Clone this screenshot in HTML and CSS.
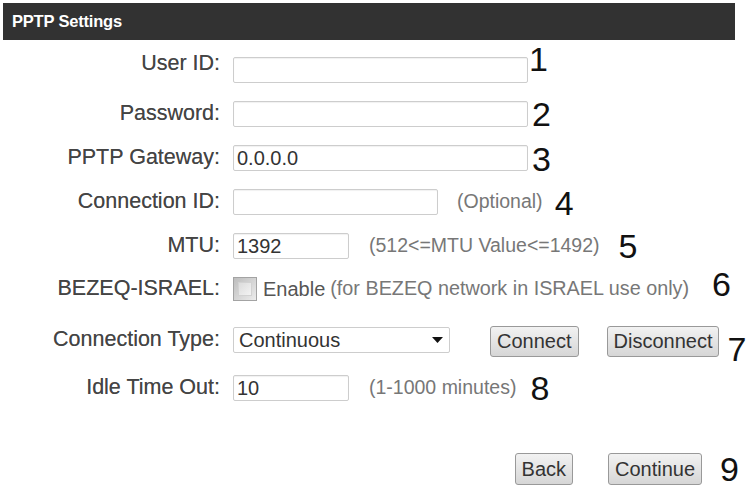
FILE: index.html
```html
<!DOCTYPE html>
<html>
<head>
<meta charset="utf-8">
<link rel="stylesheet" href="styles.css">
</head>
<body>
<div class="header">PPTP Settings</div>
<div class="form">
  <div class="row">
    <label class="lbl lbl-up">User ID:</label>
    <input class="txt w-long" type="text" value="">
    <span class="num n1">1</span>
  </div>
  <div class="row">
    <label class="lbl">Password:</label>
    <input class="txt w-long" type="password" value="">
    <span class="num n2">2</span>
  </div>
  <div class="row">
    <label class="lbl">PPTP Gateway:</label>
    <input class="txt w-long" type="text" value="0.0.0.0">
    <span class="num n3">3</span>
  </div>
  <div class="row">
    <label class="lbl">Connection ID:</label>
    <input class="txt w-mid" type="text" value="">
    <span class="hint h-opt">(Optional)</span>
    <span class="num n4">4</span>
  </div>
  <div class="row">
    <label class="lbl">MTU:</label>
    <input class="txt w-short" type="text" value="1392">
    <span class="hint h-mtu">(512&lt;=MTU Value&lt;=1492)</span>
    <span class="num n5">5</span>
  </div>
  <div class="row row-check">
    <label class="lbl">BEZEQ-ISRAEL:</label>
    <span class="check"><span class="check-in"></span></span>
    <span class="enable">Enable</span>
    <span class="hint h-bez">(for BEZEQ network in ISRAEL use only)</span>
    <span class="num n6">6</span>
  </div>
  <div class="row row-type">
    <label class="lbl">Connection Type:</label>
    <div class="select">
      <span class="sel-text">Continuous</span>
      <svg class="sel-arrow" width="11" height="6" viewBox="0 0 11 6"><path d="M0 0 H11 L5.5 6 Z" fill="#111"/></svg>
    </div>
    <button class="btn btn-connect">Connect</button>
    <button class="btn btn-disc">Disconnect</button>
    <span class="num n7">7</span>
  </div>
  <div class="row row-idle">
    <label class="lbl">Idle Time Out:</label>
    <input class="txt w-short" type="text" value="10">
    <span class="hint h-idle">(1-1000 minutes)</span>
    <span class="num n8">8</span>
  </div>
  <div class="row row-actions">
    <button class="btn">Back</button>
    <button class="btn btn-cont">Continue</button>
    <span class="num n9">9</span>
  </div>
</div>
</body>
</html>
```
FILE: styles.css
```css
* { box-sizing: border-box; }
html, body { margin: 0; padding: 0; background: #fff; }
body {
  width: 751px;
  height: 489px;
  overflow: hidden;
  font-family: "Liberation Sans", Arial, sans-serif;
}
.header {
  margin: 3px 16px 0 3px;
  height: 37px;
  background: #323232;
  color: #fff;
  font-weight: bold;
  font-size: 16.5px;
  line-height: 37px;
  padding-left: 9px;
  letter-spacing: -0.2px;
}
.form {
  display: flex;
  flex-direction: column;
  padding-top: 8px;
}
.row {
  display: flex;
  align-items: center;
  height: 44px;
}
.lbl {
  width: 220px;
  margin-right: 13px;
  text-align: right;
  font-size: 21.5px;
  color: #444;
  line-height: 1;
  flex: none;
  text-shadow: 0 0 0.6px rgba(60,60,60,0.6);
}
.lbl-up { margin-bottom: 12px; }
.txt {
  height: 26px;
  border: 1px solid #cdcdcd;
  border-radius: 2px;
  padding: 0 3px;
  font-family: "Liberation Sans", Arial, sans-serif;
  font-size: 20px;
  color: #333;
  background: #fff;
  box-shadow: inset 0 1px 1px rgba(0,0,0,0.06);
  outline: none;
  flex: none;
}
.w-long { width: 295px; }
.w-mid { width: 205px; }
.w-short { width: 116px; }
.hint {
  font-size: 19.5px;
  color: #777;
  line-height: 1;
  white-space: nowrap;
}
.h-opt { margin-left: 19px; }
.h-mtu { margin-left: 20px; }
.h-idle { margin-left: 20px; }
.h-bez { margin-left: 5px; font-size: 19.8px; }
.num {
  font-size: 34px;
  line-height: 1;
  color: #111;
}
.n1 { margin-left: 1px; margin-bottom: 23px; }
.n2 { margin-left: 4px; }
.n3 { margin-left: 4px; margin-top: 2px; }
.n4 { margin-left: 12px; margin-top: 2px; }
.n5 { margin-left: 19px; }
.n6 { margin-left: 23px; margin-bottom: 10px; }
.n7 { margin-left: 8px; margin-top: 18px; }
.n8 { margin-left: 14px; }
.n9 { margin-left: 18px; }
.row-check { height: 42px; }
.check {
  width: 24px;
  height: 24px;
  border: 1px solid #a3a3a3;
  background: linear-gradient(135deg, #bdbdbd, #ececec);
  display: flex;
  align-items: center;
  justify-content: center;
  flex: none;
}
.check-in {
  width: 14px;
  height: 14px;
  border: 1px solid #d2d2d2;
  background: linear-gradient(135deg, #dcdcdc, #f3f3f3);
}
.enable {
  margin-left: 6px;
  font-size: 20px;
  color: #555;
  line-height: 1;
}
.row-type { margin-top: 8px; }
.select {
  width: 217px;
  height: 26px;
  border: 1px solid #cdcdcd;
  border-radius: 2px;
  display: flex;
  align-items: center;
  justify-content: space-between;
  padding: 0 6px 0 5px;
  flex: none;
}
.sel-text { font-size: 20px; color: #333; line-height: 1; }
.btn {
  height: 31px;
  padding: 0 6px;
  border: 1px solid #999;
  border-radius: 3px;
  background: linear-gradient(#f2f2f2, #d6d6d6);
  font-family: "Liberation Sans", Arial, sans-serif;
  font-size: 20px;
  color: #333;
  line-height: 1;
  flex: none;
}
.btn-connect { margin-left: 40px; margin-top: 2px; }
.btn-disc { margin-left: 28px; margin-top: 2px; }
.row-idle { margin-top: 4px; }
.row-actions {
  margin-top: 37px;
  justify-content: flex-end;
  padding-right: 12px;
}
.row-actions .btn { height: 32px; }
.btn-cont { margin-left: 35px; }
```
